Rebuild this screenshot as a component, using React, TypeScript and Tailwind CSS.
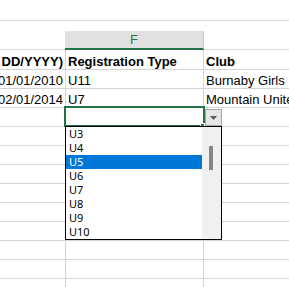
const rows = [
    { e: "DD/YYYY)", f: "Registration Type", g: "Club", bold: true },
    { e: "01/01/2010", f: "U11", g: "Burnaby Girls" },
    { e: "02/01/2014", f: "U7", g: "Mountain United" },
];

const options = ["U3", "U4", "U5", "U6", "U7", "U8", "U9", "U10"];

const App = () => {
    return (
        <div className="relative w-[289px] h-[287px] overflow-hidden bg-white text-black font-['Liberation_Sans',Arial,sans-serif] text-[13px]">
            <div className="h-[21px] border-b border-[#d4d4d4]" />
            <div className="h-[10px]" />

            {/* column headers */}
            <div className="flex h-[19px]">
                <div className="w-[65px] border-b border-[#d4d4d4]" />
                <div className="w-[139px] flex items-center justify-center leading-[15px] bg-[#e1e1e1] border-r border-r-[#c8c8c8] border-b-2 border-b-[#217346] text-[#217346]">
                    F
                </div>
                <div className="flex-1 border-b border-[#d4d4d4]" />
            </div>

            {/* data rows */}
            {rows.map((r, i) => (
                <div
                    key={i}
                    className={`flex ${i === 0 ? "h-[20px]" : "h-[19px]"} border-b border-[#d4d4d4] leading-[15px] ${r.bold ? "font-bold" : ""}`}
                >
                    <div className="w-[66px] border-r border-[#d4d4d4] flex items-end justify-end pr-[2px] overflow-hidden whitespace-nowrap">
                        {r.e}
                    </div>
                    <div className="w-[138px] border-r border-[#d4d4d4] flex items-end pl-[2px] whitespace-nowrap">
                        {r.f}
                    </div>
                    <div className="flex-1 flex items-end pl-[2px] overflow-hidden whitespace-nowrap">
                        {r.g}
                    </div>
                </div>
            ))}
            {Array.from({ length: 10 }).map((_, i) => (
                <div key={i} className="flex h-[19px] border-b border-[#d4d4d4]">
                    <div className="w-[66px] border-r border-[#d4d4d4]" />
                    <div className="w-[138px] border-r border-[#d4d4d4]" />
                    <div className="flex-1" />
                </div>
            ))}

            {/* active cell */}
            <div className="absolute left-[64px] top-[106px] w-[141px] h-[21px] border-2 border-[#217346]" />
            <div className="absolute left-[200px] top-[123px] w-[5px] h-[5px] bg-[#217346] border border-white" />

            {/* dropdown button */}
            <div className="absolute left-[205px] top-[109px] w-[17px] h-[17px] bg-[#e6e6e6] border border-[#a6a6a6] flex items-center justify-center">
                <svg width="7" height="4" viewBox="0 0 7 4">
                    <path d="M0 0h7L3.5 4z" fill="#5a5a5a" />
                </svg>
            </div>

            {/* list */}
            <div className="absolute left-[65px] top-[126px] w-[157px] h-[114px] border border-black bg-white flex font-['Noto_Sans',sans-serif] text-[11px]">
                <div className="flex-1">
                    {options.map((o) => (
                        <div
                            key={o}
                            className={`h-[14px] leading-[14px] pl-[3px] ${o === "U5" ? "bg-[#0078d7] text-white" : ""}`}
                        >
                            {o}
                        </div>
                    ))}
                </div>
                <div className="w-[19px] bg-[#f0f0f0] pt-[19px] pl-[7px]">
                    <div className="w-[4px] h-[24px] bg-[#868686]" />
                </div>
            </div>
        </div>
    );
};

export default App;
